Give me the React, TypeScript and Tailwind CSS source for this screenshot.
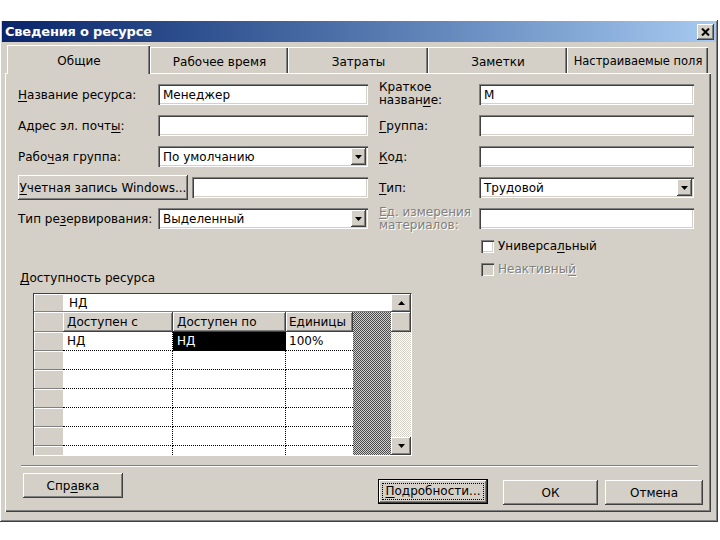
import React from "react";

const SUNKEN =
  "shadow-[inset_1px_1px_0_#808080,inset_2px_2px_0_#404040,inset_-1px_-1px_0_#ffffff,inset_-2px_-2px_0_#d4d0c8]";
const RAISED =
  "shadow-[inset_-1px_-1px_0_#404040,inset_1px_1px_0_#ffffff,inset_-2px_-2px_0_#808080,inset_2px_2px_0_#d4d0c8]";

function U({ children }: { children: React.ReactNode }) {
  return <span className="underline underline-offset-[2px]">{children}</span>;
}

function Arrow({ up }: { up?: boolean }) {
  return (
    <svg width="7" height="4" viewBox="0 0 7 4">
      {up ? <polygon points="0,4 7,4 3.5,0" fill="#000" /> : <polygon points="0,0 7,0 3.5,4" fill="#000" />}
    </svg>
  );
}

function Field({ className, value }: { className: string; value?: string }) {
  return (
    <div className={`h-[21px] bg-white ${SUNKEN} flex items-center pl-[5px] ${className}`}>
      <span className="leading-none">{value}</span>
    </div>
  );
}

function Select({ className, value }: { className: string; value: string }) {
  return (
    <div className={`h-[21px] bg-white ${SUNKEN} flex items-center pl-[5px] pr-[2px] ${className}`}>
      <span className="flex-1 leading-none">{value}</span>
      <div className={`w-[15px] h-[17px] bg-[#d4d0c8] ${RAISED} flex items-center justify-center`}>
        <Arrow />
      </div>
    </div>
  );
}

function Tab({ className, label, active }: { className: string; label: string; active?: boolean }) {
  return (
    <div
      className={`flex items-center justify-center bg-[#d4d0c8] border-t border-l border-white shadow-[inset_-1px_0_0_#404040,inset_-2px_0_0_#808080] ${
        active ? "h-[29px] -mb-[1px] relative z-10" : "h-[26px]"
      } ${className}`}
    >
      <span className="mt-[2px] whitespace-nowrap">{label}</span>
    </div>
  );
}

function Check({ label, disabled }: { label: React.ReactNode; disabled?: boolean }) {
  return (
    <div className="flex items-center h-[14px] pl-[102px]">
      <div className={`w-[13px] h-[13px] ${disabled ? "bg-[#d4d0c8]" : "bg-white"} ${SUNKEN}`} />
      <span
        className={`ml-[4px] ${disabled ? "text-[#808080] [text-shadow:1px_1px_0_#ffffff]" : ""}`}
      >
        {label}
      </span>
    </div>
  );
}

function Btn({ className, children, focus }: { className: string; children: React.ReactNode; focus?: boolean }) {
  return (
    <div
      className={`h-[25px] flex items-center justify-center bg-[#d4d0c8] ${
        focus
          ? "border border-black shadow-[inset_-1px_-1px_0_#404040,inset_1px_1px_0_#ffffff,inset_-2px_-2px_0_#808080]"
          : RAISED
      } ${className}`}
    >
      {focus ? (
        <span className="border border-dotted border-black px-[2px] leading-[15px]">{children}</span>
      ) : (
        <span>{children}</span>
      )}
    </div>
  );
}

const HATCH =
  "bg-[image:repeating-conic-gradient(#4a4a4a_0_25%,#d0d0d0_0_50%)] bg-[length:2px_2px]";
const TRACK =
  "bg-[image:repeating-conic-gradient(#d4d0c8_0_25%,#ffffff_0_50%)] bg-[length:2px_2px]";

function RowHead() {
  return <div className="w-[29px] h-full bg-[#d4d0c8] border-b border-[#808080] shadow-[inset_1px_1px_0_#ffffff]" />;
}

function DataRow({ a, b, c, sel }: { a?: string; b?: string; c?: string; sel?: boolean }) {
  return (
    <div className="flex h-[19px] shrink-0">
      <RowHead />
      <div className="w-[110px] h-full border-r border-b border-dotted border-black pl-[4px] flex items-center">
        {a}
      </div>
      <div
        className={`w-[113px] h-full border-r border-b border-dotted border-black pl-[4px] flex items-center ${
          sel ? "bg-black text-white" : ""
        }`}
      >
        {b}
      </div>
      <div className="w-[67px] h-full border-b border-dotted border-black pl-[3px] flex items-center">{c}</div>
    </div>
  );
}

export default function App() {
  return (
    <div className="w-[720px] h-[540px] bg-white pt-[20px] font-['DejaVu_Sans',sans-serif] text-[12px] text-black overflow-hidden">
      <div className={`w-[718px] h-[502px] bg-[#d4d0c8] ${RAISED} pt-[1px] px-[2px]`}>
        {/* title bar */}
        <div className="h-[21px] bg-linear-to-r from-[#0a246a] to-[#a6caf0] flex items-center pl-[3px] pr-[2px]">
          <span className="flex-1 text-white font-bold text-[13px] tracking-[-0.2px]">Сведения о ресурсе</span>
          <div className={`w-[17px] h-[16px] bg-[#d4d0c8] ${RAISED} flex items-center justify-center`}>
            <svg width="9" height="8" viewBox="0 0 9 8">
              <path d="M1 0.5 L8 7.5 M8 0.5 L1 7.5" stroke="#000" strokeWidth="2" />
            </svg>
          </div>
        </div>

        <div className="ml-[3px] w-[706px] mt-[2px]">
          {/* tabs */}
          <div className="flex items-end h-[29px] pl-[2px]">
            <Tab className="w-[143px]" label="Общие" active />
            <Tab className="w-[138px]" label="Рабочее время" />
            <Tab className="w-[140px]" label="Затраты" />
            <Tab className="w-[139px]" label="Заметки" />
            <Tab className="w-[141px] text-[11.5px]" label="Настраиваемые поля" />
          </div>

          {/* panel */}
          <div className="h-[439px] border-t border-l border-white shadow-[inset_-1px_-1px_0_#404040,inset_-2px_-2px_0_#808080] pt-[10px]">
            <div className="flex ml-[12px]">
              {/* left column */}
              <div className="w-[350px] flex flex-col">
                <div className="flex items-center h-[21px]">
                  <span className="w-[140px]">
                    <U>Н</U>азвание ресурса:
                  </span>
                  <Field className="w-[210px]" value="Менеджер" />
                </div>
                <div className="flex items-center h-[21px] mt-[10px]">
                  <span className="w-[140px]">
                    Адрес эл. почт<U>ы</U>:
                  </span>
                  <Field className="w-[210px]" />
                </div>
                <div className="flex items-center h-[21px] mt-[10px]">
                  <span className="w-[140px]">
                    Рабо<U>ч</U>ая группа:
                  </span>
                  <Select className="w-[210px]" value="По умолчанию" />
                </div>
                <div className="flex items-center h-[21px] mt-[10px]">
                  <Btn className="w-[170px] h-[21px]">
                    <U>У</U>четная запись Windows...
                  </Btn>
                  <Field className="w-[176px] ml-[4px]" />
                </div>
                <div className="flex items-center h-[21px] mt-[10px]">
                  <span className="w-[140px]">
                    Тип ре<U>з</U>ервирования:
                  </span>
                  <Select className="w-[210px]" value="Выделенный" />
                </div>
                <div className="mt-[42px] h-[14px] leading-[14px] ml-[2px]">
                  <U>Д</U>оступность ресурса
                </div>
              </div>

              {/* right column */}
              <div className="w-[315px] ml-[11px] flex flex-col">
                <div className="flex items-center h-[21px]">
                  <span className="w-[100px] leading-[13px] -mt-[2px]">
                    Краткое
                    <br />
                    назван<U>и</U>е:
                  </span>
                  <Field className="w-[215px]" value="М" />
                </div>
                <div className="flex items-center h-[21px] mt-[10px]">
                  <span className="w-[100px]">
                    <U>Г</U>руппа:
                  </span>
                  <Field className="w-[215px]" />
                </div>
                <div className="flex items-center h-[21px] mt-[10px]">
                  <span className="w-[100px]">
                    <U>К</U>од:
                  </span>
                  <Field className="w-[215px]" />
                </div>
                <div className="flex items-center h-[21px] mt-[10px]">
                  <span className="w-[100px]">
                    <U>Т</U>ип:
                  </span>
                  <Select className="w-[215px]" value="Трудовой" />
                </div>
                <div className="flex items-center h-[21px] mt-[10px]">
                  <span className="w-[100px] leading-[13px] text-[#808080] [text-shadow:1px_1px_0_#ffffff]">
                    <U>Е</U>д. измерения
                    <br />
                    материалов:
                  </span>
                  <Field className="w-[215px]" />
                </div>
                <div className="mt-[10px]">
                  <Check
                    label={
                      <>
                        Универса<U>л</U>ьный
                      </>
                    }
                  />
                </div>
                <div className="mt-[9px]">
                  <Check
                    disabled
                    label={
                      <>
                        Неактивны<U>й</U>
                      </>
                    }
                  />
                </div>
              </div>
            </div>

            {/* grid */}
            <div className="ml-[27px] mt-[8px] w-[379px] h-[163px] border border-t-[#404040] border-l-[#404040] border-b-white border-r-white flex overflow-hidden">
              <div className="w-[357px] flex flex-col bg-white">
                <div className="flex h-[18px] shrink-0 border-b border-[#808080]">
                  <div className="w-[29px] h-full bg-[#d4d0c8] shadow-[inset_1px_1px_0_#ffffff]" />
                  <div className="flex-1 pl-[6px] flex items-center">НД</div>
                </div>
                <div className="flex flex-1 overflow-hidden">
                  <div className="w-[319px] flex flex-col">
                    <div className="flex h-[20px] shrink-0">
                      <RowHead />
                      <div className={`w-[110px] h-full bg-[#d4d0c8] ${RAISED} pl-[4px] flex items-center`}>
                        Доступен с
                      </div>
                      <div className={`w-[113px] h-full bg-[#d4d0c8] ${RAISED} pl-[4px] flex items-center`}>
                        Доступен по
                      </div>
                      <div className={`w-[67px] h-full bg-[#d4d0c8] ${RAISED} pl-[3px] flex items-center`}>
                        Единицы
                      </div>
                    </div>
                    <DataRow a="НД" b="НД" c="100%" sel />
                    <DataRow />
                    <DataRow />
                    <DataRow />
                    <DataRow />
                    <DataRow />
                    <DataRow />
                  </div>
                  <div className={`w-[38px] ${HATCH}`} />
                </div>
              </div>
              <div className="w-[20px] flex flex-col">
                <div className={`h-[18px] shrink-0 bg-[#d4d0c8] ${RAISED} flex items-center justify-center`}>
                  <Arrow up />
                </div>
                <div className={`h-[20px] shrink-0 bg-[#d4d0c8] ${RAISED}`} />
                <div className={`flex-1 ${TRACK}`} />
                <div className={`h-[18px] shrink-0 bg-[#d4d0c8] ${RAISED} flex items-center justify-center`}>
                  <Arrow />
                </div>
              </div>
            </div>

            {/* separator */}
            <div className="ml-[15px] w-[677px] mt-[9px] h-[2px] border-t border-[#808080] border-b border-b-white" />

            {/* buttons */}
            <div className="flex items-start mt-[6px]">
              <Btn className="ml-[17px] w-[100px]">
                Спр<U>а</U>вка
              </Btn>
              <Btn className="ml-[255px] w-[110px] mt-[6px]" focus>
                <U>П</U>одробности...
              </Btn>
              <Btn className="ml-[15px] w-[95px] mt-[7px]">ОК</Btn>
              <Btn className="ml-[7px] w-[98px] mt-[7px]">Отмена</Btn>
            </div>
          </div>
        </div>
      </div>
    </div>
  );
}
